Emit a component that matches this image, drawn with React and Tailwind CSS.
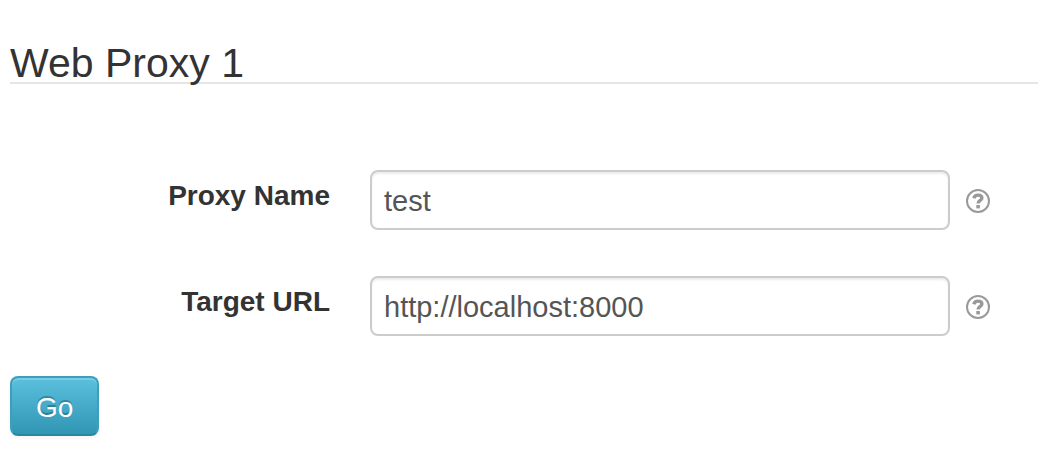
import React, { useState } from 'react';

function HelpButton({ label }) {
  return (
    <button type="button" aria-label={label} className="ml-4 shrink-0 pt-[2px]">
      <svg viewBox="0 0 24 24" className="block size-6" fill="none" aria-hidden="true">
        <circle cx="12" cy="12" r="11" stroke="#999999" strokeWidth="2" />
        <path d="M7.8 9.2C8.4 7 9.9 6.1 12 6.1c2.3 0 3.9 1.1 3.9 2.9 0 2.5-3.8 2.5-3.8 5.6" stroke="#999999" strokeWidth="3.4" />
        <rect x="10.3" y="16" width="3.6" height="3.4" fill="#999999" />
      </svg>
    </button>
  );
}

function Field({ id, label, initial }) {
  const [value, setValue] = useState(initial);
  return (
    <div className="flex items-start">
      <label htmlFor={id} className="w-80 shrink-0 pt-[6px] text-right text-[28px] leading-10 font-bold">
        {label}
      </label>
      <div className="ml-10 flex min-w-0 grow items-center pr-12">
        <input
          id={id}
          type="text"
          value={value}
          onChange={(e) => setValue(e.target.value)}
          className="h-[60px] min-w-0 grow rounded-lg border-2 border-[#cccccc] bg-white px-3 pt-[2px] text-[29px] text-[#555555] shadow-[inset_0_2px_2px_rgba(0,0,0,0.075)]"
        />
        <HelpButton label={`Help for ${label}`} />
      </div>
    </div>
  );
}

export default function App() {
  return (
    <main className="bg-white pt-[42px] pl-[10px] font-['Liberation_Sans',Arial,sans-serif] text-[#333333]">
      <h1 className="h-[42px] border-b-2 border-[#e5e5e5] text-[41px] leading-[42px]">Web Proxy 1</h1>
      <form className="pt-[86px] pb-6" onSubmit={(e) => e.preventDefault()}>
        <div className="flex flex-col gap-[46px]">
          <Field id="proxy-name" label="Proxy Name" initial="test" />
          <Field id="target-url" label="Target URL" initial="http://localhost:8000" />
        </div>
        <button
          type="submit"
          className="mt-10 h-[60px] rounded-lg border-2 border-[#3e9fbc] border-b-[#2b86a2] bg-linear-to-b from-[#5bc0de] to-[#2f96b4] px-6 pt-1 text-[28px] text-white shadow-[inset_0_2px_0_rgba(255,255,255,0.2),0_2px_4px_rgba(0,0,0,0.05)] [text-shadow:0_-2px_0_rgba(0,0,0,0.25)]"
        >
          Go
        </button>
      </form>
    </main>
  );
}
